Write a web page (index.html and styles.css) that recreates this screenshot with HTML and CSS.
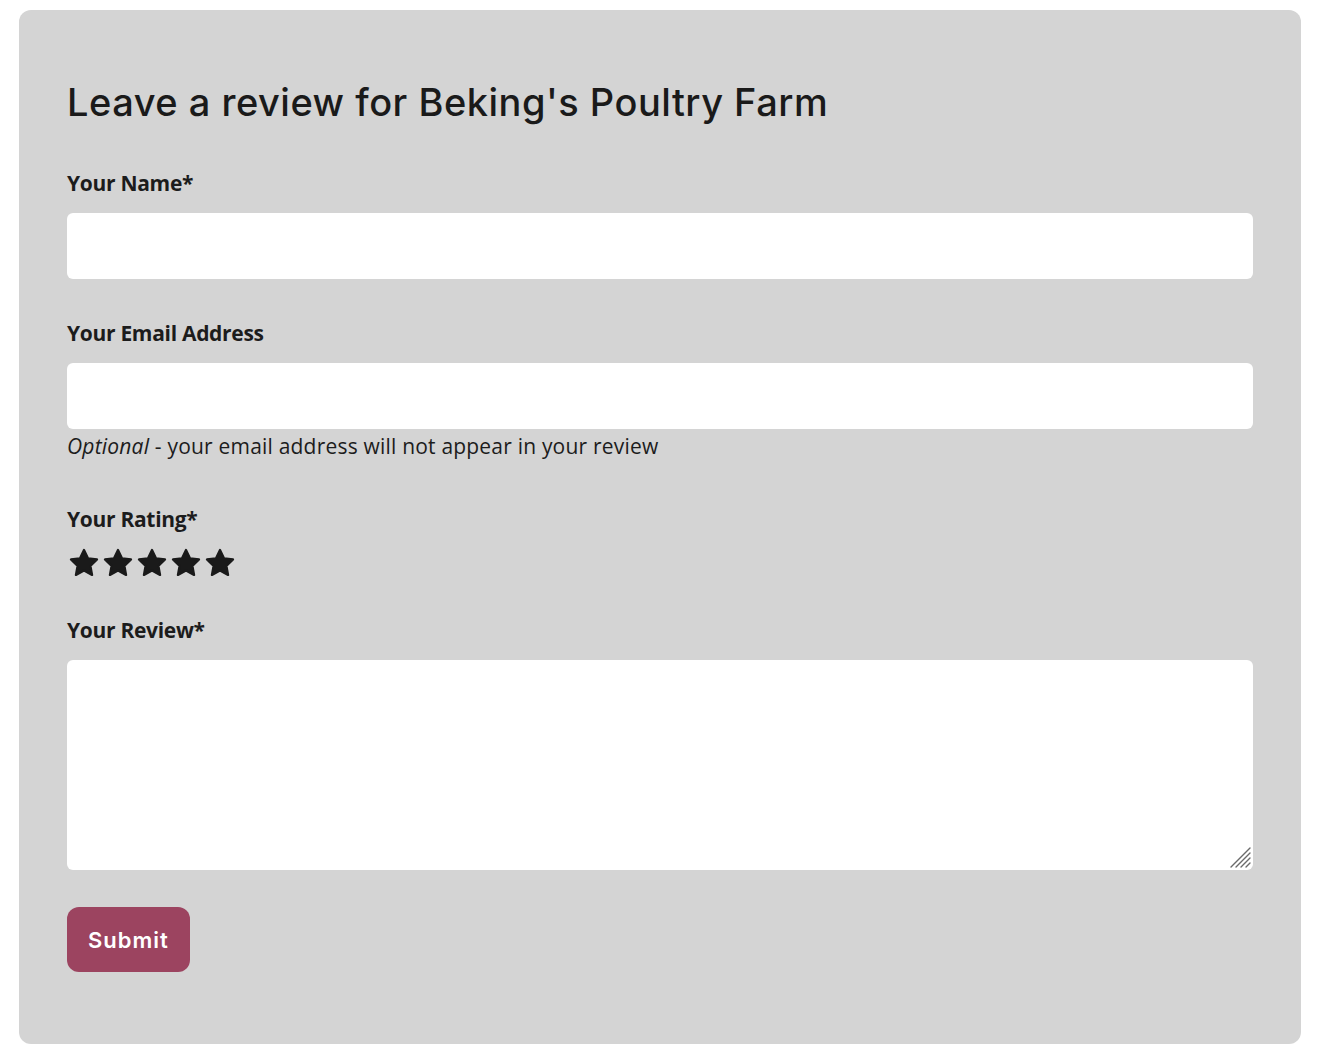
FILE: index.html
```html
<!DOCTYPE html>
<html lang="en">
<head>
    <meta charset="UTF-8">
    <meta name="viewport" content="width=device-width, initial-scale=1.0">
    <title>Leave a review</title>
    <link rel="stylesheet" href="styles.css">
</head>
<body>
    <div class="review-card">
        <h2 class="review-title">Leave a review for Beking's Poultry Farm</h2>
        <form class="review-form">
            <label class="field-label" for="name">Your Name*</label>
            <input class="field-input" type="text" id="name">

            <label class="field-label label-email" for="email">Your Email Address</label>
            <input class="field-input" type="email" id="email">
            <p class="field-help"><em>Optional</em> - your email address will not appear in your review</p>

            <span class="field-label label-rating">Your Rating*</span>
            <div class="stars">
                <svg viewBox="0 0 24 24"><path d="M12 2.8l2.8 5.9 6.4.8-4.7 4.5 1.2 6.4L12 17.3l-5.7 3.1 1.2-6.4-4.7-4.5 6.4-.8z"/></svg>
                <svg viewBox="0 0 24 24"><path d="M12 2.8l2.8 5.9 6.4.8-4.7 4.5 1.2 6.4L12 17.3l-5.7 3.1 1.2-6.4-4.7-4.5 6.4-.8z"/></svg>
                <svg viewBox="0 0 24 24"><path d="M12 2.8l2.8 5.9 6.4.8-4.7 4.5 1.2 6.4L12 17.3l-5.7 3.1 1.2-6.4-4.7-4.5 6.4-.8z"/></svg>
                <svg viewBox="0 0 24 24"><path d="M12 2.8l2.8 5.9 6.4.8-4.7 4.5 1.2 6.4L12 17.3l-5.7 3.1 1.2-6.4-4.7-4.5 6.4-.8z"/></svg>
                <svg viewBox="0 0 24 24"><path d="M12 2.8l2.8 5.9 6.4.8-4.7 4.5 1.2 6.4L12 17.3l-5.7 3.1 1.2-6.4-4.7-4.5 6.4-.8z"/></svg>
            </div>

            <label class="field-label label-review" for="review">Your Review*</label>
            <div class="textarea-wrap">
                <textarea class="field-input field-textarea" id="review"></textarea>
                <svg class="resize-grip" viewBox="0 0 22 22">
                    <path d="M2 21L21 2M7 21L21 7M12 21L21 12M17 21L21 17"/>
                </svg>
            </div>

            <button type="button" class="submit-btn">Submit</button>
        </form>
    </div>
</body>
</html>
```

FILE: styles.css
```css
body {
    margin: 0;
    padding: 10px 17px 10px 19px;
    background: #fff;
    font-family: "Open Sans", "Liberation Sans", sans-serif;
    color: #1c1c1c;
}

.review-card {
    background: #d4d4d4;
    border-radius: 12px;
    padding: 70px 48px 72px;
}

.review-title {
    margin: 0 0 45px;
    font-family: Inter, "Liberation Sans", sans-serif;
    font-size: 38px;
    line-height: 44px;
    font-weight: 500;
    letter-spacing: 0.5px;
    color: #1a1a1a;
}

.review-form {
    display: flex;
    flex-direction: column;
    align-items: flex-start;
}

.field-label {
    display: block;
    font-size: 21px;
    line-height: 28px;
    font-weight: 700;
    letter-spacing: -0.3px;
    margin-bottom: 16px;
}

.label-email {
    margin-top: 40px;
}

.label-rating {
    margin-top: 46px;
    margin-bottom: 15px;
}

.label-review {
    margin-top: 38px;
}

.field-input {
    box-sizing: border-box;
    width: 100%;
    height: 66px;
    border: none;
    border-radius: 6px;
    background: #fff;
    padding: 0 16px;
    font: inherit;
    font-size: 20px;
    outline: none;
}

.textarea-wrap {
    position: relative;
    width: 100%;
}

.field-textarea {
    display: block;
    height: 210px;
    padding: 12px 16px;
    resize: none;
}

.resize-grip {
    position: absolute;
    right: 2px;
    bottom: 2px;
    width: 22px;
    height: 22px;
    stroke: #6a6a6a;
    stroke-width: 1.4;
    stroke-linecap: round;
    fill: none;
}

.field-help {
    margin: 4px 0 0;
    font-size: 21px;
    line-height: 26px;
    letter-spacing: 0.2px;
}

.stars {
    display: flex;
    height: 30px;
}

.stars svg {
    width: 34px;
    height: 34px;
    margin-top: -2px;
    fill: #1a1a1a;
    stroke: #1a1a1a;
    stroke-width: 1.6;
    stroke-linejoin: round;
}

.submit-btn {
    margin-top: 37px;
    height: 65px;
    padding: 0 21px;
    border: none;
    border-radius: 12px;
    background: #9c4460;
    color: #fff;
    font-family: Inter, "Liberation Sans", sans-serif;
    font-size: 22px;
    font-weight: 600;
    letter-spacing: 1px;
    cursor: pointer;
}
```
